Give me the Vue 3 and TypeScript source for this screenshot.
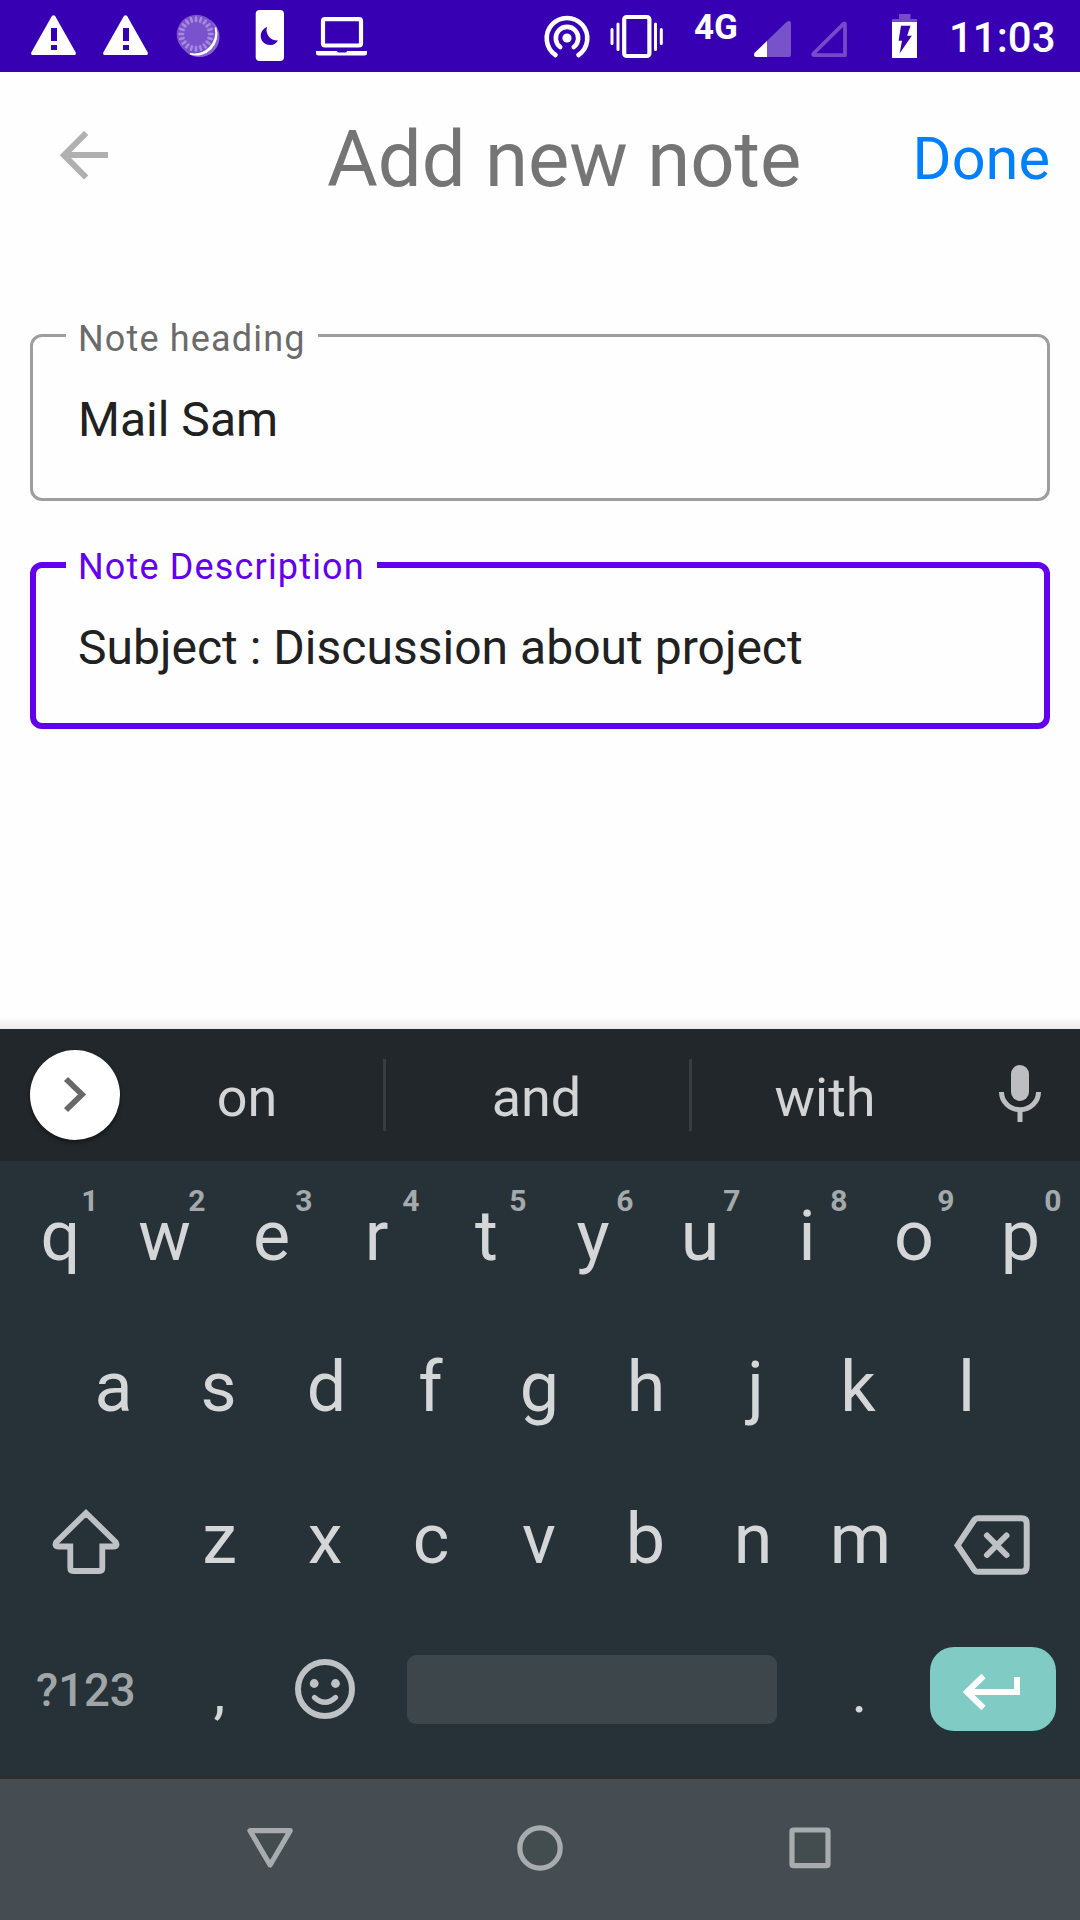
<script setup lang="ts">
interface Key {
  label: string
  shift: number
  hint?: string
}

const optical: Record<string, number> = {
  q: 2.5, w: -0.5, e: -0.5, r: -2.5, t: 0.5, a: 2, d: 1, f: -2, h: -0.5, j: 2, k: -2.5, l: -1,
  z: 1, x: -0.5, c: -1.5, v: -0.5, b: -1, n: -0.5, p: -0.5,
}

const toKey = (label: string): Key => ({ label, shift: optical[label] ?? 0 })

const topRow: Key[] = 'qwertyuiop'.split('').map((c, i) => ({ ...toKey(c), hint: String((i + 1) % 10) }))
const homeRow: Key[] = 'asdfghjkl'.split('').map(toKey)
const bottomRow: Key[] = 'zxcvbnm'.split('').map(toKey)

// Dial marks around the sync indicator
const ticks: number[] = Array.from({ length: 20 }, (_, i) => i * 18)
</script>

<template>
  <div class="screen">
    <header class="status">
      <div class="status-group">
        <svg width="90" height="72" viewBox="0 0 90 72">
          <path d="M51.600 16.500Q53.500 13.800 55.400 16.500L75.600 52.200Q76.600 55 74 55H33Q30.400 55 31.400 52.200Z" fill="#fff" />
          <path d="M51 28h6v13h-6zM51 45h6v5h-6z" fill="#3700b3" />
        </svg>
        <svg width="72" height="72" viewBox="18 0 72 72">
          <path d="M51.600 16.500Q53.500 13.800 55.400 16.500L75.600 52.200Q76.600 55 74 55H33Q30.400 55 31.400 52.200Z" fill="#fff" />
          <path d="M51 28h6v13h-6zM51 45h6v5h-6z" fill="#3700b3" />
        </svg>
        <svg width="70" height="72" viewBox="162 0 70 72">
          <circle cx="199.500" cy="37" r="20" fill="#8a66d3" />
          <circle cx="196.500" cy="34.500" r="19.800" fill="#7b52cd" />
          <path d="M215.500 27.500A20.500 20.500 0 0 1 190 53.800A22 22 0 0 0 215.500 27.500Z" fill="#fff" stroke="#fff" stroke-width="1.600" />
          <g stroke="#a68bdd" stroke-width="2.600" stroke-linecap="round">
            <line v-for="a in ticks" :key="a" x1="196" y1="17.500" x2="196" y2="21" :transform="`rotate(${a} 196 34)`" />
          </g>
        </svg>
        <svg width="70" height="72" viewBox="232 0 70 72">
          <rect x="255.700" y="10" width="28.300" height="51" rx="4" fill="#fff" />
          <path d="M267 27A9.300 9.300 0 1 0 278 40.500A10.500 10.500 0 0 1 267 27Z" fill="#3700b3" />
        </svg>
        <svg width="80" height="72" viewBox="302 0 80 72">
          <rect x="323" y="19.200" width="38" height="26.300" rx="2" fill="none" stroke="#fff" stroke-width="4.200" />
          <path d="M316 51h21q0 1.500 2 1.500h6q2 0 2-1.500h20v2q0 2.500-2.500 2.500h-46q-2.500 0-2.500-2.500z" fill="#fff" />
        </svg>
      </div>
      <div class="status-group">
        <svg width="70" height="72" viewBox="532 0 70 72">
          <circle cx="567" cy="38" r="4.600" fill="#fff" />
          <g fill="none" stroke="#fff" stroke-width="4.600" stroke-linecap="round">
            <path d="M560.200 47A11.200 11.200 0 1 1 573.800 47" />
            <path d="M555.500 55A20.300 20.300 0 1 1 578.500 55" />
          </g>
        </svg>
        <svg width="92" height="72" viewBox="602 0 92 72">
          <rect x="624.200" y="17" width="25.200" height="39" rx="2.500" fill="none" stroke="#fff" stroke-width="4.200" />
          <g stroke="#fff" stroke-width="3" stroke-linecap="round">
            <path d="M612 29.500v14M618 24v25.500M655.500 24v25.500M661.300 29.500v14" />
          </g>
        </svg>
        <span class="network">4G</span>
        <svg width="54" height="72" viewBox="745 0 54 72">
          <path d="M755 52.500L786.500 22Q791 19.500 791 24V54.500Q791 57 788.500 57H756Q752.500 56 755 52.500Z" fill="#fff" opacity=".32" />
          <path d="M767 41V57H756Q752.500 56 755 52.500Z" fill="#fff" />
        </svg>
        <svg width="70" height="72" viewBox="799 0 70 72">
          <path d="M813.500 53.500L843.500 23.800Q845 22.500 845 25V55.200H814.500Q812.500 55.200 813.500 53.500Z" fill="none" stroke="#7748ca" stroke-width="3.800" stroke-linejoin="round" />
        </svg>
        <svg width="80" height="72" viewBox="869 0 80 72">
          <path d="M899 14h11.500v5H917v3h-25v-3h7z" fill="#774aca" />
          <rect x="892" y="22" width="25" height="36" fill="#fff" />
          <path d="M901 25.700h9.500l-3.400 10h4.700L899.600 53.500l2.400-12.800h-3.400z" fill="#3700b3" />
        </svg>
        <span class="clock">11:03</span>
      </div>
    </header>

    <main class="page">
      <div class="toolbar">
        <svg class="back" width="48" height="48" viewBox="60 131 48 48">
          <path d="M86.200 133L64 155.200L86.200 177.500M65 155H108" fill="none" stroke="#b0b0b0" stroke-width="6" />
        </svg>
        <h1 class="title">Add new note</h1>
        <button class="done">Done</button>
      </div>
      <div class="field">
        <label class="field-label">Note heading</label>
        <div class="field-value">Mail Sam</div>
      </div>
      <div class="field focused">
        <label class="field-label">Note Description</label>
        <div class="field-value">Subject : Discussion about project</div>
      </div>
    </main>

    <section class="keyboard">
      <div class="suggestions">
        <div class="expand">
          <svg width="90" height="90" viewBox="30 1050 90 90">
            <path d="M66 1079L82 1094.500L66 1110" fill="none" stroke="#686868" stroke-width="5.800" />
          </svg>
        </div>
        <span class="word first">on</span>
        <i class="divider"></i>
        <span class="word">and</span>
        <i class="divider"></i>
        <span class="word last">with</span>
        <svg width="120" height="132" viewBox="960 1029 120 132">
          <rect x="1011" y="1065" width="18" height="36" rx="9" fill="#bdbec0" />
          <path d="M1001.500 1092A18.500 17.700 0 0 0 1038.500 1092M1020 1109V1122" fill="none" stroke="#bdbec0" stroke-width="5" />
        </svg>
      </div>
      <div class="row top">
        <div v-for="k in topRow" :key="k.label" class="key">
          <span class="glyph" :style="{ left: k.shift + 'px' }">{{ k.label }}</span><sup class="hint">{{ k.hint }}</sup>
        </div>
      </div>
      <div class="row home">
        <div v-for="k in homeRow" :key="k.label" class="key">
          <span class="glyph" :style="{ left: k.shift + 'px' }">{{ k.label }}</span>
        </div>
      </div>
      <div class="row">
        <svg width="165" height="151" viewBox="0 1464 165 151">
          <path d="M86 1513L115.800 1542.200Q118 1546.500 113.500 1546.500H102.300V1568Q102.300 1571 99.300 1571H73.300Q70.300 1571 70.300 1568V1546.500H58.500Q54 1546.500 56.200 1542.200Z" fill="none" stroke="#bfc2c5" stroke-width="5.800" />
        </svg>
        <div v-for="k in bottomRow" :key="k.label" class="key">
          <span class="glyph" :style="{ left: k.shift + 'px' }">{{ k.label }}</span>
        </div>
        <svg width="166" height="151" viewBox="914 1464 166 151">
          <g fill="none" stroke="#bfc2c5" stroke-width="6">
            <path d="M957.500 1545.300L974 1520.500Q975.500 1518.300 978 1518.300H1021.500Q1026.700 1518.300 1026.700 1523.500V1566.500Q1026.700 1571.800 1021.500 1571.800H978Q975.500 1571.800 974 1569.600Z" />
            <path d="M987 1535.500L1006.500 1555M1006.500 1535.500L987 1555" stroke-linecap="round" />
          </g>
        </svg>
      </div>
      <div class="row last-row">
        <div class="symbols">?123</div>
        <div class="key punct"><span class="glyph comma">,</span></div>
        <svg width="107" height="161" viewBox="272 1615 107 161">
          <circle cx="325" cy="1689" r="27" fill="none" stroke="#bfc2c5" stroke-width="6" />
          <circle cx="314.200" cy="1683.500" r="4.400" fill="#bfc2c5" />
          <circle cx="335.500" cy="1683.500" r="4.400" fill="#bfc2c5" />
          <path d="M314.500 1697.500Q325 1707 335.500 1697.500" fill="none" stroke="#bfc2c5" stroke-width="5.200" stroke-linecap="round" />
        </svg>
        <div class="space"></div>
        <div class="key punct"><span class="glyph period">.</span></div>
        <div class="enter">
          <svg width="126" height="84" viewBox="930 1647 126 84">
            <path d="M983.500 1676L967 1692L983.500 1708M968 1692H1017V1677" fill="none" stroke="#fff" stroke-width="6" />
          </svg>
        </div>
      </div>
    </section>

    <nav class="nav">
      <svg width="54" height="54" viewBox="243 1821 54 54">
        <path d="M250 1830.700H290.200L270.100 1865Z" fill="#434c4f" stroke="#a9acae" stroke-width="5.200" stroke-linejoin="round" />
      </svg>
      <svg width="54" height="54" viewBox="513 1821 54 54">
        <circle cx="540" cy="1848" r="20.200" fill="#434c4f" stroke="#a9acae" stroke-width="5.200" />
      </svg>
      <svg width="54" height="54" viewBox="783 1821 54 54">
        <rect x="792" y="1830" width="36" height="35.700" rx="1.500" fill="#434c4f" stroke="#a9acae" stroke-width="5.200" />
      </svg>
    </nav>
  </div>
</template>

<style>
body {
  margin: 0;
}
</style>

<style scoped>
.screen {
  width: 1080px;
  height: 1920px;
  display: flex;
  flex-direction: column;
  background: #fefefe;
  font-family: Roboto, "Liberation Sans", sans-serif;
  overflow: hidden;
  white-space: nowrap;
}
svg {
  display: block;
  flex: none;
}
.status,
.page,
.keyboard,
.nav {
  flex: none;
}
.status {
  height: 72px;
  background: #3700b3;
  color: #fff;
  display: flex;
  justify-content: space-between;
}
.status-group {
  display: flex;
}
.network {
  width: 51px;
  font-size: 35px;
  font-weight: 700;
  line-height: 56px;
}
.clock {
  width: 131px;
  font-size: 42px;
  font-weight: 500;
  line-height: 76px;
}
.page {
  height: 957px;
  box-sizing: border-box;
  padding: 0 30px;
  background: linear-gradient(to bottom, rgba(0, 0, 0, 0) 945px, rgba(0, 0, 0, 0.08) 957px);
}
.toolbar {
  height: 262px;
  display: flex;
  align-items: flex-start;
}
.back {
  margin: 59px 0 0 30px;
}
.title {
  margin: 28px 0 0 219px;
  width: 586px;
  font-size: 77.900px;
  font-weight: 400;
  line-height: 120px;
  color: #757575;
}
.done {
  margin: 46px 0 0;
  padding: 0;
  border: 0;
  background: none;
  font: 400 59.500px/82px Roboto, "Liberation Sans", sans-serif;
  color: #0080ff;
}
.field {
  position: relative;
  height: 167px;
  box-sizing: border-box;
  margin-bottom: 61px;
  border: 3px solid #9e9e9e;
  border-radius: 12px;
  padding: 50px 0 0 45px;
}
.field.focused {
  border: 6px solid #6200ee;
  padding: 47px 0 0 42px;
}
.field-label {
  position: absolute;
  left: 33px;
  top: -19px;
  padding: 0 12px 0 12px;
  background: #fefefe;
  font-size: 36px;
  line-height: 42px;
  letter-spacing: 1.160px;
  color: #6b6b6b;
}
.focused .field-label {
  left: 30px;
  top: -22px;
  color: #6200ee;
}
.field-value {
  font-size: 48px;
  line-height: 66px;
  letter-spacing: 0.020px;
  color: #212121;
}
.keyboard {
  height: 747px;
  background: #263238;
}
.suggestions {
  height: 132px;
  background: #22272b;
  display: flex;
  align-items: center;
}
.expand {
  width: 90px;
  height: 90px;
  margin-left: 30px;
  border-radius: 50%;
  background: #fff;
  box-shadow: 0 2px 4px rgba(0, 0, 0, 0.5);
}
.word {
  width: 303px;
  text-align: center;
  font-size: 54px;
  line-height: 132px;
  color: #d3d4d6;
  position: relative;
  left: -1px;
  top: 3px;
}
.word.first {
  width: 254px;
  margin-right: 9px;
  left: 0;
}
.word.last {
  width: 268px;
}
.divider {
  width: 3px;
  height: 72px;
  background: #383d41;
}
.row {
  height: 151px;
  display: flex;
}
.row.top {
  padding-left: 4.500px;
}
.row.home {
  height: 152px;
  padding-left: 58px;
}
.key {
  position: relative;
  width: 107px;
  text-align: center;
  font-size: 70px;
  line-height: 151px;
  color: #d5d6d8;
}
.glyph {
  position: relative;
}
.comma {
  left: 1px;
}
.period {
  left: -1px;
}
.hint {
  position: absolute;
  left: 76.800px;
  top: 20px;
  font-size: 30px;
  font-weight: 700;
  line-height: 40px;
  color: #a4a9ac;
}
.last-row {
  height: 161px;
}
.symbols {
  width: 165px;
  padding-left: 36px;
  box-sizing: border-box;
  font-size: 45.500px;
  font-weight: 500;
  line-height: 151px;
  color: #a0a5a8;
}
.punct {
  font-size: 60px;
  line-height: 153px;
}
.space {
  width: 370px;
  height: 69px;
  margin: 40px 30px 0 28px;
  border-radius: 9px;
  background: #3c464b;
}
.enter {
  width: 126px;
  height: 84px;
  margin: 32px 0 0 16px;
  border-radius: 24px;
  background: #80cbc4;
}
.nav {
  height: 144px;
  box-sizing: border-box;
  border-top: 3px solid #2b2f31;
  padding: 42px 243px 0;
  background: #454c52;
  display: flex;
  justify-content: space-between;
}
</style>
